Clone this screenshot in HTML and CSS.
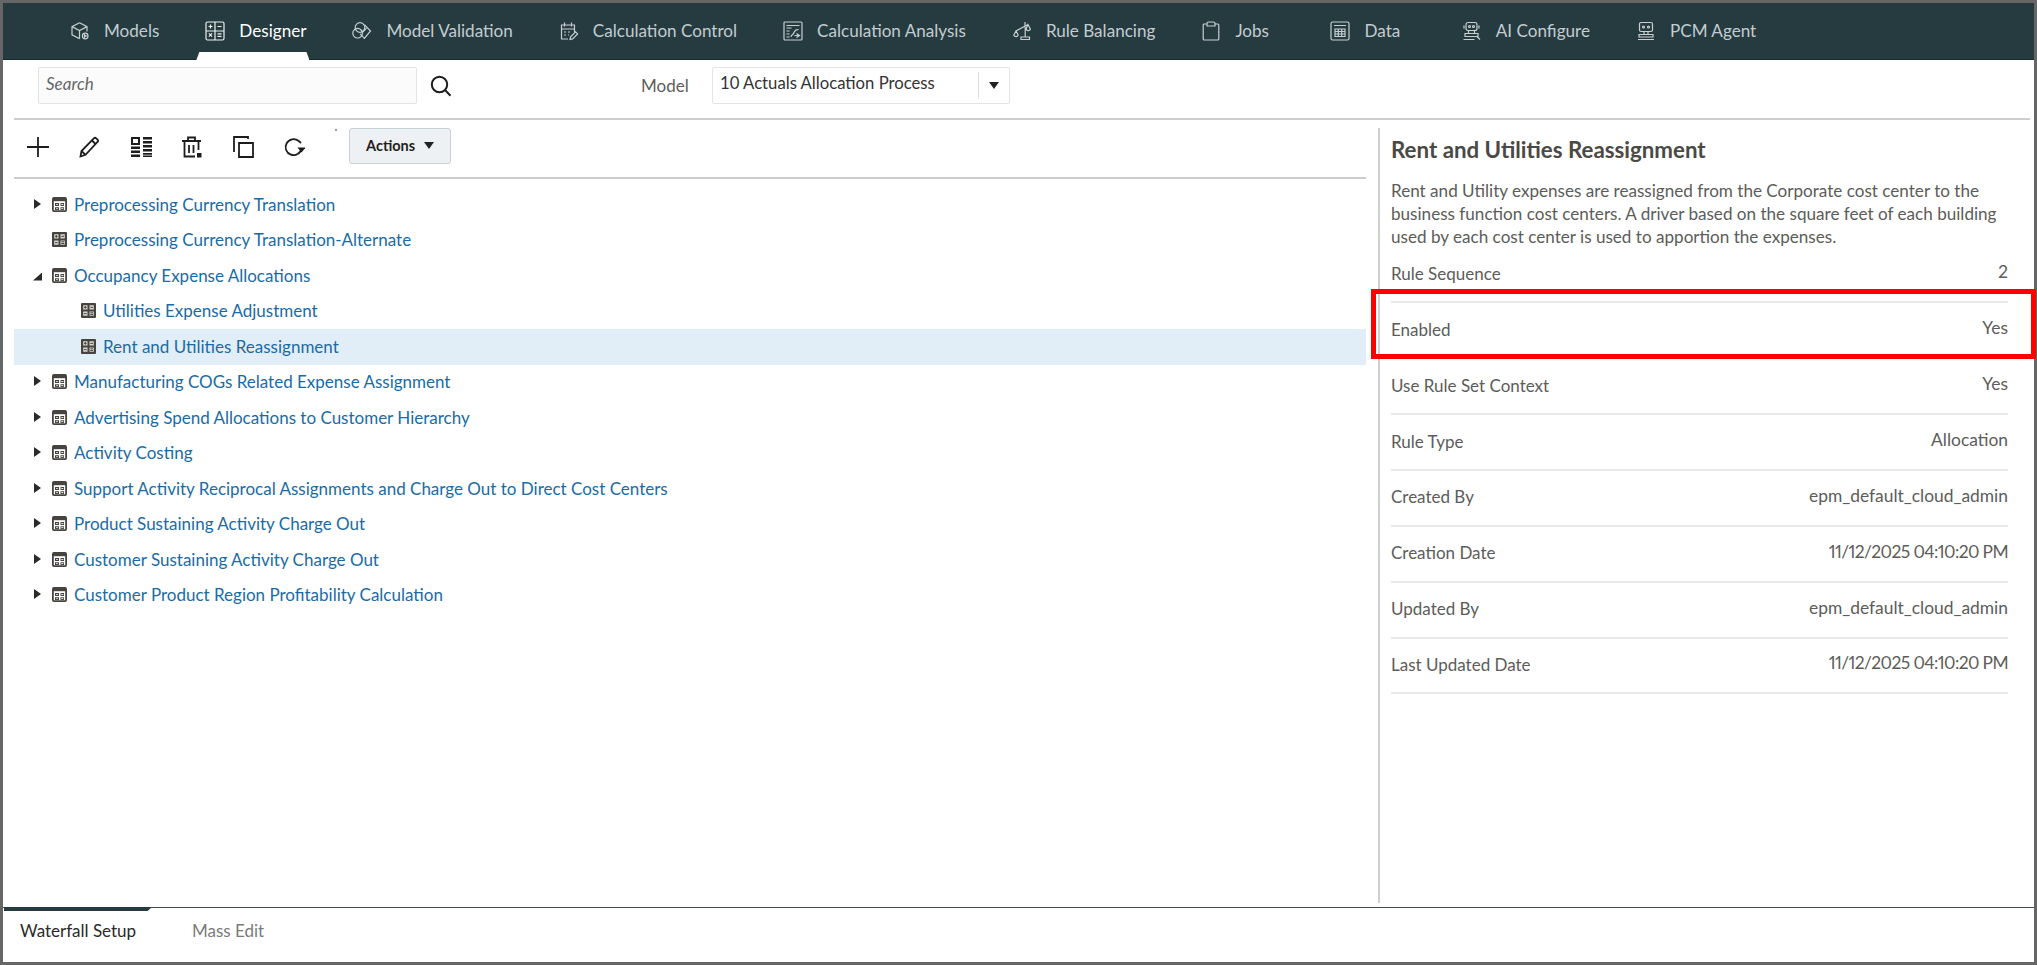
FILE: index.html
```html
<!DOCTYPE html>
<html lang="en">
<head>
<meta charset="utf-8">
<title>Designer</title>
<link rel="stylesheet" href="styles.css">
</head>
<body>
<svg class="defs" width="0" height="0" aria-hidden="true">
  <symbol id="i-set" viewBox="0 0 15 15">
    <rect x="0.9" y="0.9" width="13.2" height="13.2" rx="1" fill="#fff" stroke="#47443f" stroke-width="1.8"/>
    <rect x="1" y="1" width="13" height="3.2" fill="#47443f"/>
    <path d="M3 6h4v3H3zM8.500 6H12v3H8.500zM3 10.300h4v2.700H3zM8.500 10.300H12v2.700H8.500z" fill="#47443f"/>
    <path d="M4.200 7.500h1.600M9.300 7.500h2M4.200 11.600h1.600M9.300 11.600h2" stroke="#fff" stroke-width="0.9"/>
  </symbol>
  <symbol id="i-rule" viewBox="0 0 15 15">
    <rect x="0" y="0" width="15" height="15" rx="1" fill="#47443f"/>
    <path d="M2.200 2.200h4.300v4.300H2.200zM8.500 2.200h4.300v4.300H8.500zM2.200 8.500h4.300v4.300H2.200zM8.500 8.500h4.300v4.300H8.500z" fill="#d9d7d3"/>
    <path d="M3 4.350h2.700M4.350 3v2.700M9.300 4.350H12M3 10.650h2.700M9.300 9.800H12M9.300 11.500H12" stroke="#47443f" stroke-width="1"/>
  </symbol>
</svg>

<div class="frame">
  <nav class="nav">
    <a class="nav-item">
      <svg class="nav-icon" viewBox="0 0 20 20"><path d="M9.500 1.800 17 5.600v5M9.500 1.800 2 5.600v8.200l7.500 4M2 5.600l7.500 3.900L17 5.600M9.500 9.500v8.300"/><circle cx="15.200" cy="15" r="2.800"/><path d="M14.400 13.800v2.400l1.900-1.200z"/></svg>
      <span>Models</span>
    </a>
    <a class="nav-item active">
      <svg class="nav-icon" viewBox="0 0 20 20"><rect x="1" y="1" width="18" height="18" rx="1.500"/><path d="M10 1v18M1 10h18M3.500 5.500h4M5.500 3.500v4M12.500 5.500h4M3.900 12.400l3.200 3.200M7.100 12.400l-3.200 3.200M12.500 12.800h4M12.500 15.400h4"/></svg>
      <span>Designer</span>
    </a>
    <a class="nav-item">
      <svg class="nav-icon" viewBox="0 0 20 20"><circle cx="8" cy="6.500" r="4.800"/><circle cx="5.600" cy="12.200" r="4.800"/><path d="M12.400 3.600 18.500 10l-6.100 7.400-4.200-4.600"/><path d="m9 9 2 2 3.500-3.800"/></svg>
      <span>Model Validation</span>
    </a>
    <a class="nav-item">
      <svg class="nav-icon" viewBox="0 0 20 20"><path d="M9 18H2.500V4h13v7M5.500 1.500v4M12.500 1.500v4M2.500 8h13M5 11h2M9 11h2M5 14h2M9 14h1"/><path d="m11 18.500.6-2.600 5-5 2 2-5 5z"/></svg>
      <span>Calculation Control</span>
    </a>
    <a class="nav-item">
      <svg class="nav-icon" viewBox="0 0 20 20"><rect x="1" y="1" width="18" height="18" rx="1"/><path d="M3.500 4.500h13M3.500 7h5M3.500 10h3M3.500 13h3M3.500 16h3M8 16c.5-3 2-1.500 3-4.500.7-2 2-3 4.500-3M11.500 14.500h5M13.500 12.500l3 2-3 2"/></svg>
      <span>Calculation Analysis</span>
    </a>
    <a class="nav-item">
      <svg class="nav-icon" viewBox="0 0 20 20"><path d="M3 10 15 3.500M12 1v5M12.200 6v10M8 18.500h8.500v-2.500H8zM3 10 .8 14a2.300 2.300 0 0 0 4.400 0zM15 3.500l-2 4.500a2.300 2.300 0 0 0 4.400 0z" transform="translate(1 0)"/></svg>
      <span>Rule Balancing</span>
    </a>
    <a class="nav-item wide">
      <svg class="nav-icon" viewBox="0 0 20 20"><path d="M6 3H3.200a1 1 0 0 0-1 1v14a1 1 0 0 0 1 1h13.600a1 1 0 0 0 1-1V4a1 1 0 0 0-1-1H14"/><path d="M6 5V2.500a1.500 1.500 0 0 1 1.500-1.500h5A1.500 1.500 0 0 1 14 2.500V5z"/></svg>
      <span>Jobs</span>
    </a>
    <a class="nav-item wide">
      <svg class="nav-icon" viewBox="0 0 20 20"><rect x="1" y="1" width="18" height="18" rx="1.500"/><path d="M4 4.500h12M5 8h10v7.500H5zM5 10.500h10M5 13h10M8.300 8v7.500M11.700 8v7.500"/></svg>
      <span>Data</span>
    </a>
    <a class="nav-item">
      <svg class="nav-icon" viewBox="0 0 20 20"><rect x="4" y="1.500" width="11" height="8" rx="2"/><circle cx="7.500" cy="5.500" r="1"/><circle cx="11.500" cy="5.500" r="1"/><path d="M2 4.500v3M17 4.500v3M6.500 9.500v3M12.500 9.500v3M3 12.500h13v3H3zM1.500 18.500h11M15 15.500l3 3"/></svg>
      <span>AI Configure</span>
    </a>
    <a class="nav-item">
      <svg class="nav-icon" viewBox="0 0 20 20"><rect x="3.500" y="1.500" width="13" height="9" rx="1.500"/><circle cx="7.500" cy="6" r="1"/><circle cx="12.500" cy="6" r="1"/><path d="M8 10.500v3h4v-3M3 13.500h14v2.500H3zM2 18.500h16"/></svg>
      <span>PCM Agent</span>
    </a>
  </nav>

  <div class="filter-row">
    <div class="search-box">Search</div>
    <svg class="search-icon" viewBox="0 0 22 22"><circle cx="9.500" cy="9.500" r="7.700"/><path d="m15 15 5.500 5.800"/></svg>
    <label class="model-label">Model</label>
    <div class="model-select">
      <span class="model-value">10 Actuals Allocation Process</span>
      <span class="model-arrow"><i class="caret"></i></span>
    </div>
  </div>

  <main class="main">
    <section class="left">
      <div class="toolbar">
        <svg class="tool" viewBox="0 0 22 22"><path d="M0 11h22M11 1v20"/></svg>
        <svg class="tool" viewBox="0 0 22 22"><path d="M2.500 20.500 3.500 15 15.800 2.300a1.700 1.700 0 0 1 2.400 0l1.300 1.300a1.700 1.700 0 0 1 0 2.400L7.500 18.800zM3.500 15l4 3.800M14 4.500l4 4"/></svg>
        <svg class="tool solid" viewBox="0 0 22 22"><path d="M1 1h9v8H1zM3 3v4h5V3zM1 10.500h9v2.500H1zM1 14.500h9V17H1zM1 18.500h9V21H1zM13 1h9v2.500h-9zM13 5h9v2.500h-9zM13 9h9v2.500h-9zM13 13h9v2.500h-9zM13 17h9v1.800h-9zM13 19.500h9V21h-9z"/></svg>
        <svg class="tool" viewBox="0 0 22 22"><path d="M1 5h19M7 5V1.500h7V5M3.500 5v15.500H14M17.500 5v9M8 9v8M12.500 9v8"/><path class="fill" d="M16 17h4.500v4.500H16z"/></svg>
        <svg class="tool" viewBox="0 0 22 22"><path d="M6 1H2v15M7 7h14v14H7z"/><path d="M2 1h14v2"/></svg>
        <svg class="tool" viewBox="0 0 22 22"><path d="M18.500 12.500a8 8 0 1 1-2.800-7.500L18 7"/><path class="fill" d="M14.500 11.500h8L18.500 16.500z"/></svg>
        <i class="speck"></i>
        <button class="actions">Actions <i class="caret"></i></button>
      </div>
      <ul class="tree">
        <li class="row"><i class="tw closed"></i><svg class="node"><use href="#i-set"/></svg><a>Preprocessing Currency Translation</a></li>
        <li class="row"><i class="tw"></i><svg class="node"><use href="#i-rule"/></svg><a>Preprocessing Currency Translation-Alternate</a></li>
        <li class="row"><i class="tw open"></i><svg class="node"><use href="#i-set"/></svg><a>Occupancy Expense Allocations</a></li>
        <li class="row child"><svg class="node"><use href="#i-rule"/></svg><a>Utilities Expense Adjustment</a></li>
        <li class="row child selected"><svg class="node"><use href="#i-rule"/></svg><a>Rent and Utilities Reassignment</a></li>
        <li class="row"><i class="tw closed"></i><svg class="node"><use href="#i-set"/></svg><a>Manufacturing COGs Related Expense Assignment</a></li>
        <li class="row"><i class="tw closed"></i><svg class="node"><use href="#i-set"/></svg><a>Advertising Spend Allocations to Customer Hierarchy</a></li>
        <li class="row"><i class="tw closed"></i><svg class="node"><use href="#i-set"/></svg><a>Activity Costing</a></li>
        <li class="row"><i class="tw closed"></i><svg class="node"><use href="#i-set"/></svg><a>Support Activity Reciprocal Assignments and Charge Out to Direct Cost Centers</a></li>
        <li class="row"><i class="tw closed"></i><svg class="node"><use href="#i-set"/></svg><a>Product Sustaining Activity Charge Out</a></li>
        <li class="row"><i class="tw closed"></i><svg class="node"><use href="#i-set"/></svg><a>Customer Sustaining Activity Charge Out</a></li>
        <li class="row"><i class="tw closed"></i><svg class="node"><use href="#i-set"/></svg><a>Customer Product Region Profitability Calculation</a></li>
      </ul>
    </section>

    <aside class="detail">
      <h2 class="detail-title">Rent and Utilities Reassignment</h2>
      <p class="detail-desc">Rent and Utility expenses are reassigned from the Corporate cost center to the business function cost centers. A driver based on the square feet of each building used by each cost center is used to apportion the expenses.</p>
      <dl class="props">
        <div class="prop"><dt>Rule Sequence</dt><dd>2</dd></div>
        <div class="prop"><dt>Enabled</dt><dd>Yes</dd></div>
        <div class="prop"><dt>Use Rule Set Context</dt><dd>Yes</dd></div>
        <div class="prop"><dt>Rule Type</dt><dd>Allocation</dd></div>
        <div class="prop"><dt>Created By</dt><dd>epm_default_cloud_admin</dd></div>
        <div class="prop"><dt>Creation Date</dt><dd class="date">11/12/2025 04:10:20 PM</dd></div>
        <div class="prop"><dt>Updated By</dt><dd>epm_default_cloud_admin</dd></div>
        <div class="prop"><dt>Last Updated Date</dt><dd class="date">11/12/2025 04:10:20 PM</dd></div>
      </dl>
      <div class="highlight"></div>
    </aside>
  </main>

  <footer class="tabs">
    <a class="tab active">Waterfall Setup</a>
    <a class="tab">Mass Edit</a>
  </footer>
</div>
</body>
</html>
```
FILE: styles.css
```css
* { box-sizing: border-box; }
html, body { margin: 0; padding: 0; background: #fff; }
body { font-family: Lato, "Open Sans", "Liberation Sans", sans-serif; color: #333; overflow: hidden; }
.defs { position: absolute; }
i { display: block; font-style: normal; }

.frame {
  width: 2037px; height: 965px;
  border: 3px solid #666;
  display: flex; flex-direction: column;
  position: relative;
}

/* top navigation */
.nav {
  height: 57px; flex: none;
  background: #253b40;
  border-bottom: 1px solid #1b2c30;
  display: flex; align-items: center;
  gap: 46px;
  padding: 0 0 1px 67px;
}
.nav-item {
  display: flex; align-items: center; gap: 14px;
  position: relative; height: 100%;
  color: #c3ccd1; font-size: 17.100px; white-space: nowrap;
}
.nav-item.wide { margin-right: 15.500px; }
.nav-item.active { color: #fff; }
.nav-item.active::after {
  content: ""; position: absolute;
  left: -9px; right: -3px; bottom: -2px; height: 8px;
  background: #fff;
  clip-path: polygon(3px 0, calc(100% - 3px) 0, 100% 100%, 0 100%);
}
.nav-icon {
  width: 20px; height: 20px; flex: none;
  fill: none; stroke: #c9cfd1; stroke-width: 1.200;
}
.nav-item.active .nav-icon { stroke: #eef0f0; }

/* search + model */
.filter-row {
  height: 60px; flex: none;
  margin: 0 4px 0 11px;
  border-bottom: 2px solid #cdcdcd;
  display: flex; align-items: flex-start;
  padding: 7px 0 0 24px;
}
.search-box {
  width: 379px; height: 37px;
  background: #fbfbfb;
  border: 1px solid #e4e4e4; border-radius: 2px;
  font-style: italic; font-size: 17px; color: #666;
  padding: 5px 7px;
}
.search-icon {
  width: 22px; height: 22px; margin: 8px 0 0 13px; flex: none;
  fill: none; stroke: #1d1d1d; stroke-width: 2;
}
.model-label { margin: 8px 0 0 189px; width: 71px; font-size: 17px; color: #5d5d5d; }
.model-select {
  width: 298px; height: 37px;
  background: #fff;
  border: 1px solid #e4e4e4; border-radius: 2px;
  display: flex; align-items: stretch;
  font-size: 16.700px; color: #333;
}
.model-value { flex: 1; padding: 5px 0 0 7px; }
.model-arrow {
  width: 31px; margin: 4px 0 5px;
  border-left: 1px solid #ddd;
  display: flex; align-items: center; justify-content: center;
}
.caret {
  width: 0; height: 0;
  border-left: 5.500px solid transparent; border-right: 5.500px solid transparent;
  border-top: 7px solid #222;
}

/* main */
.main { flex: 1; min-height: 0; display: flex; padding-top: 8px; }
.left { width: 1352px; margin-left: 11px; flex: none; }
.toolbar {
  height: 51px;
  border-bottom: 2px solid #cdcdcd;
  display: flex; align-items: flex-start;
  padding-left: 13px; gap: 29.300px;
}
.tool {
  width: 22px; height: 22px; margin-top: 8px; flex: none;
  fill: none; stroke: #1d1d1d; stroke-width: 1.800;
}
.tool.solid { fill: #1d1d1d; stroke: none; fill-rule: evenodd; }
.tool .fill { fill: #1d1d1d; stroke: none; }
.speck {
  width: 2px; height: 2px; background: #999; margin: 1px 0 0 0; flex: none;
}
.actions {
  width: 102px; height: 36px; margin-left: -17px;
  background: #eef1f3;
  border: 1.500px solid #c7d0d5; border-radius: 3px;
  font: bold 14.500px Lato, "Liberation Sans", sans-serif; color: #1f1f1f;
  display: flex; align-items: center; justify-content: center; gap: 9px;
  padding: 0 0 2px;
}

/* tree */
.tree { list-style: none; margin: 0; padding: 8.250px 0 0; }
.row {
  height: 35.500px;
  display: flex; align-items: center;
  padding-bottom: 2px;
  font-size: 17px; color: #1a6ba5;
}
.row a { white-space: nowrap; }
.tw { width: 38px; height: 15px; flex: none; position: relative; }
.tw.closed::before {
  content: ""; position: absolute; left: 20px; top: 2px;
  border-left: 7px solid #2c2a26;
  border-top: 5.500px solid transparent; border-bottom: 5.500px solid transparent;
}
.tw.open::before {
  content: ""; position: absolute; left: 19px; top: 5px;
  width: 9px; height: 8px; background: #2c2a26;
  clip-path: polygon(100% 0, 100% 100%, 0 100%);
}
.node { width: 15px; height: 15px; flex: none; margin-right: 7px; }
.row.child { padding-left: 67px; }
.row.selected { background: #e1eef7; }

/* details */
.detail {
  flex: 1; margin: 0 26px 4px 12px;
  border-left: 2px solid #cfcfcf;
  padding-left: 11px;
  position: relative;
}
.detail-title {
  margin: 9px 0 0; font-size: 22.300px; line-height: 26px; font-weight: 700; color: #4a4945;
}
.detail-desc {
  margin: 15.500px 0 0; font-size: 17.100px; line-height: 23px; color: #5c5c5a;
}
.props { margin: 0; }
.prop {
  height: 55.860px;
  border-bottom: 2px solid #e9e9e9;
  padding-bottom: 2px;
  display: flex; align-items: center; justify-content: space-between;
  font-size: 17px; color: #5c5c5a;
}
.prop dd { margin: 0 0 3px; font-size: 17.400px; }
.prop dd.date { font-variant-numeric: proportional-nums; letter-spacing: -0.600px; }
.highlight {
  position: absolute; left: -9px; right: -28px; top: 161px; height: 70px;
  border: 5px solid #f00;
}

/* bottom tabs */
.tabs {
  height: 55px; flex: none;
  border-top: 1px solid #3d4e52;
  display: flex; align-items: flex-start;
  font-size: 17px; color: #7b7b7b;
  padding-left: 1px;
}
.tab { padding: 12px 0 0 16px; height: 100%; width: 173px; position: relative; }
.tab.active { color: #2a2a2a; width: 172px; }
.tab.active::before {
  content: ""; position: absolute; left: 0; top: -1px; width: 148px; height: 4px;
  background: #253b40;
  clip-path: polygon(0 0, 100% 0, 97% 100%, 0 100%);
}
```
